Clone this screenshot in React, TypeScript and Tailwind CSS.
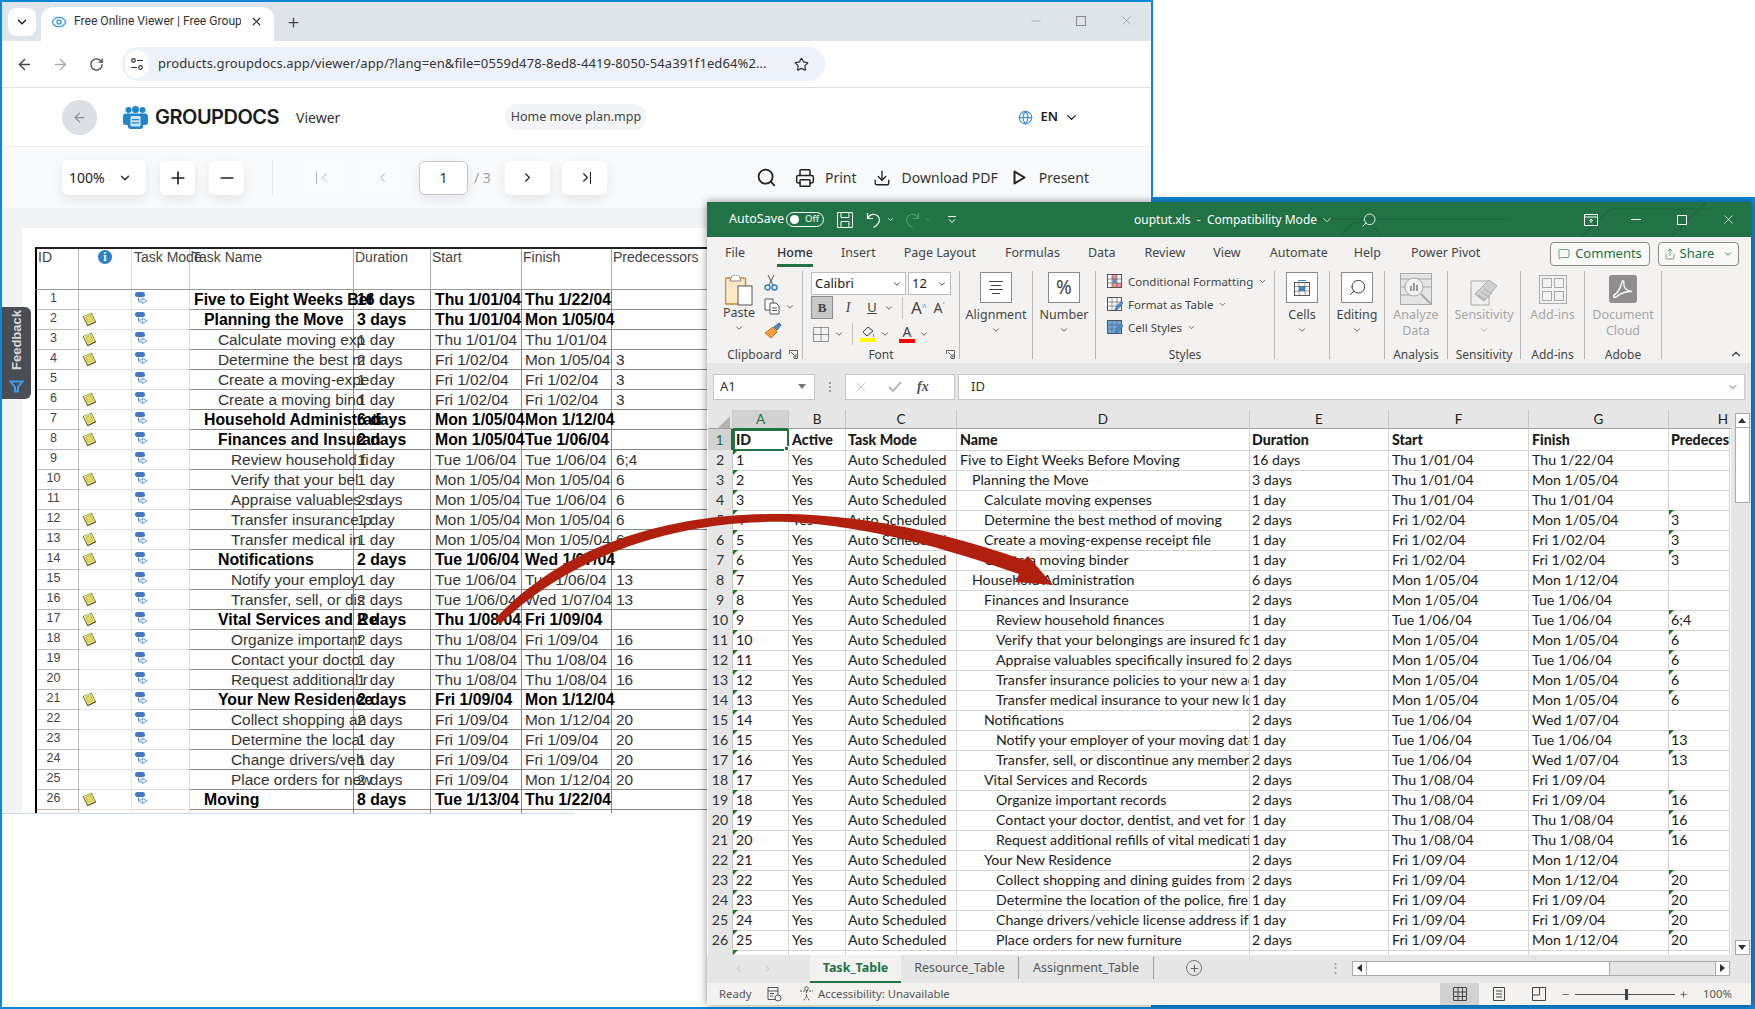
import { ChevronDown, ChevronLeft, ChevronRight, ChevronUp, Plus, Minus, Search, Printer, Download, Globe, ArrowLeft, ArrowRight, RotateCw, Star, X, Eye, MessageSquare, Share } from 'lucide-react';

type Task = { name: string; short?: string; level: number; note?: boolean; dur: string; start: string; finish: string; pred?: string; bold?: boolean };

const tasks: Task[] = [
  { name: 'Five to Eight Weeks Before Moving', short: 'Five to Eight Weeks Bef', level: 0, bold: true, dur: '16 days', start: 'Thu 1/01/04', finish: 'Thu 1/22/04' },
  { name: 'Planning the Move', level: 1, bold: true, note: true, dur: '3 days', start: 'Thu 1/01/04', finish: 'Mon 1/05/04' },
  { name: 'Calculate moving expenses', short: 'Calculate moving exp', level: 2, note: true, dur: '1 day', start: 'Thu 1/01/04', finish: 'Thu 1/01/04' },
  { name: 'Determine the best method of moving', short: 'Determine the best m', level: 2, note: true, dur: '2 days', start: 'Fri 1/02/04', finish: 'Mon 1/05/04', pred: '3' },
  { name: 'Create a moving-expense receipt file', short: 'Create a moving-expe', level: 2, dur: '1 day', start: 'Fri 1/02/04', finish: 'Fri 1/02/04', pred: '3' },
  { name: 'Create a moving binder', short: 'Create a moving bind', level: 2, note: true, dur: '1 day', start: 'Fri 1/02/04', finish: 'Fri 1/02/04', pred: '3' },
  { name: 'Household Administration', short: 'Household Administrati', level: 1, bold: true, note: true, dur: '6 days', start: 'Mon 1/05/04', finish: 'Mon 1/12/04' },
  { name: 'Finances and Insurance', short: 'Finances and Insuran', level: 2, bold: true, note: true, dur: '2 days', start: 'Mon 1/05/04', finish: 'Tue 1/06/04' },
  { name: 'Review household finances', short: 'Review household fi', level: 3, dur: '1 day', start: 'Tue 1/06/04', finish: 'Tue 1/06/04', pred: '6;4' },
  { name: 'Verify that your belongings are insured for the move', short: 'Verify that your bel', level: 3, note: true, dur: '1 day', start: 'Mon 1/05/04', finish: 'Mon 1/05/04', pred: '6' },
  { name: 'Appraise valuables specifically insured for the move', short: 'Appraise valuables s', level: 3, dur: '2 days', start: 'Mon 1/05/04', finish: 'Tue 1/06/04', pred: '6' },
  { name: 'Transfer insurance policies to your new address', short: 'Transfer insurance p', level: 3, note: true, dur: '1 day', start: 'Mon 1/05/04', finish: 'Mon 1/05/04', pred: '6' },
  { name: 'Transfer medical insurance to your new location', short: 'Transfer medical in', level: 3, note: true, dur: '1 day', start: 'Mon 1/05/04', finish: 'Mon 1/05/04', pred: '6' },
  { name: 'Notifications', level: 2, bold: true, note: true, dur: '2 days', start: 'Tue 1/06/04', finish: 'Wed 1/07/04' },
  { name: 'Notify your employer of your moving date', short: 'Notify your employ', level: 3, dur: '1 day', start: 'Tue 1/06/04', finish: 'Tue 1/06/04', pred: '13' },
  { name: 'Transfer, sell, or discontinue any memberships', short: 'Transfer, sell, or dis', level: 3, note: true, dur: '2 days', start: 'Tue 1/06/04', finish: 'Wed 1/07/04', pred: '13' },
  { name: 'Vital Services and Records', short: 'Vital Services and Re', level: 2, bold: true, note: true, dur: '2 days', start: 'Thu 1/08/04', finish: 'Fri 1/09/04' },
  { name: 'Organize important records', short: 'Organize important', level: 3, note: true, dur: '2 days', start: 'Thu 1/08/04', finish: 'Fri 1/09/04', pred: '16' },
  { name: 'Contact your doctor, dentist, and vet for records', short: 'Contact your docto', level: 3, dur: '1 day', start: 'Thu 1/08/04', finish: 'Thu 1/08/04', pred: '16' },
  { name: 'Request additional refills of vital medications', short: 'Request additional r', level: 3, dur: '1 day', start: 'Thu 1/08/04', finish: 'Thu 1/08/04', pred: '16' },
  { name: 'Your New Residence', level: 2, bold: true, note: true, dur: '2 days', start: 'Fri 1/09/04', finish: 'Mon 1/12/04' },
  { name: 'Collect shopping and dining guides from your new town', short: 'Collect shopping an', level: 3, dur: '2 days', start: 'Fri 1/09/04', finish: 'Mon 1/12/04', pred: '20' },
  { name: 'Determine the location of the police, fire station', short: 'Determine the local', level: 3, dur: '1 day', start: 'Fri 1/09/04', finish: 'Fri 1/09/04', pred: '20' },
  { name: 'Change drivers/vehicle license address if needed', short: 'Change drivers/veh', level: 3, dur: '1 day', start: 'Fri 1/09/04', finish: 'Fri 1/09/04', pred: '20' },
  { name: 'Place orders for new furniture', short: 'Place orders for new', level: 3, dur: '2 days', start: 'Fri 1/09/04', finish: 'Mon 1/12/04', pred: '20' },
  { name: 'Moving', level: 1, bold: true, note: true, dur: '8 days', start: 'Tue 1/13/04', finish: 'Thu 1/22/04' },
];

const viewerIndent = ['pl-[4px]', 'pl-[14px]', 'pl-[28px]', 'pl-[41px]'];
const sheetIndent = ['pl-[3px]', 'pl-[15px]', 'pl-[27px]', 'pl-[39px]'];

function NoteIcon() {
  return (
    <svg width="15" height="15" viewBox="0 0 15 15">
      <path d="M.8 4.5 9.5.8l4.7 9.4-8.700 4z" fill="#3b3a1c" />
      <path d="M1.5 4.5 9.2 1.3l4 8.3L5.8 13z" fill="#f4ee78" />
      <path d="M4 5.2l4.5-1.900 2.300 5L6.300 10.400z" fill="none" stroke="#a8a248" strokeWidth="0.8" />
      <path d="M5.500 6.500l3-1.300M6.400 8.300l3-1.300" stroke="#b5af50" strokeWidth="0.7" />
    </svg>
  );
}

function ModeIcon() {
  return (
    <svg width="13" height="12" viewBox="0 0 13 12">
      <rect x="0" y="0" width="10" height="5" rx="2.5" fill="#3f78c4" />
      <path d="M3.5 5.5v2.500h4V6.200L12 8.800l-4.500 2.700V10h-3c-.7 0-1-.4-1-1z" fill="#fff" stroke="#5b8fd0" strokeWidth="0.9" />
    </svg>
  );
}

function GroupDocsLogo() {
  return (
    <svg width="25" height="23" viewBox="0 0 25 23" fill="#1f86cc">
      <circle cx="5.5" cy="4" r="3" />
      <circle cx="12.5" cy="3.5" r="3.5" />
      <circle cx="19.5" cy="4" r="3" />
      <path d="M0 10.5C0 8 1.500 7.500 4 7.500h17c2.500 0 4 .5 4 3v6c0 1.500-1 2.500-3 2.500h-2v1.500c0 1.500-1 2.500-2.500 2.500h-10C6 23 5 22 5 20.500V19H3c-2 0-3-1-3-2.500z" />
      <rect x="7.5" y="10" width="10" height="10.5" rx="1" fill="#cfe6f6" />
      <path d="M9 13h7v1.300H9zM9 16.200h7v1.300H9z" fill="#1f86cc" />
    </svg>
  );
}

function ToolButton({ children, muted, width = 'w-[45px]' }: { children: React.ReactNode; muted?: boolean; width?: string }) {
  return (
    <div className={`flex h-[34px] items-center justify-center rounded-md ${width} ${muted ? 'bg-[#fafbfc] text-[#a8acb2]' : 'bg-white text-[#222] shadow-[0_4px_12px_rgba(0,0,0,0.09)]'}`}>
      {children}
    </div>
  );
}

function BrowserWindow() {
  return (
    <div className="absolute left-0 top-0 flex h-[1009px] w-[1153px] flex-col border-2 border-[#0c88d8] bg-white font-['Noto_Sans',sans-serif]">
      <div className="flex h-[39px] shrink-0 items-end bg-[#dfe3ea] pl-[6px]">
        <div className="mb-[5px] flex h-[28px] w-[28px] items-center justify-center rounded-lg bg-white">
          <ChevronDown size={14} strokeWidth={2.5} className="text-[#222]" />
        </div>
        <div className="ml-[5px] flex h-[34px] w-[233px] items-center rounded-t-xl bg-white pb-[5px] pl-[10px]">
          <Eye size={16} strokeWidth={2} className="text-[#3f9bdc]" />
          <span className="ml-[7px] w-[167px] overflow-hidden whitespace-nowrap font-['Roboto',sans-serif] text-[12.1px] text-[#333]">Free Online Viewer | Free Group</span>
          <X size={13} strokeWidth={2.2} className="ml-[9px] text-[#333]" />
        </div>
        <Plus size={15} className="mb-[11px] ml-[12px] text-[#444]" />
        <div className="mb-[13px] ml-auto flex items-center gap-[33px] pr-[17px] text-[#888]">
          <Minus size={14} strokeWidth={1} />
          <div className="h-[10px] w-[10px] border border-[#888]" />
          <X size={15} strokeWidth={1} />
        </div>
      </div>

      <div className="flex h-[47px] shrink-0 items-center border-b border-[#e0e0e0] pl-[14px]">
        <ArrowLeft size={17} className="text-[#444]" />
        <ArrowRight size={17} className="ml-[19px] text-[#aaa]" />
        <RotateCw size={15} className="ml-[20px] text-[#444]" />
        <div className="ml-[18px] flex h-[34px] w-[703px] items-center rounded-full bg-[#edf2fa] pl-[3px]">
          <div className="flex h-[28px] w-[24px] items-center justify-center rounded-full bg-white">
            <svg width="14" height="14" viewBox="0 0 14 14" fill="none" stroke="#333" strokeWidth="1.2">
              <circle cx="3.5" cy="3.5" r="1.8" />
              <path d="M7 3.5h6M1 10.500h6" />
              <circle cx="10.5" cy="10.5" r="1.8" />
            </svg>
          </div>
          <span className="ml-[9px] whitespace-nowrap text-[13px] tracking-[0.1px] text-[#333]">products.groupdocs.app/viewer/app/?lang=en&amp;file=0559d478-8ed8-4419-8050-54a391f1ed64%2...</span>
          <Star size={15} className="ml-auto mr-[16px] text-[#333]" />
        </div>
      </div>

      <div className="flex h-[59px] shrink-0 items-center border-b border-[#eceef0] pl-[60px]">
        <div className="flex h-[35px] w-[35px] items-center justify-center rounded-full bg-[#dcdfe4]">
          <ArrowLeft size={15} className="text-[#8b9097]" />
        </div>
        <div className="ml-[26px]">
          <GroupDocsLogo />
        </div>
        <span className="ml-[7px] font-['Inter',sans-serif] text-[20px] font-semibold tracking-[-0.5px] text-[#1b1b1b]">GROUPDOCS</span>
        <span className="ml-[17px] text-[14px] text-[#333]">Viewer</span>
        <div className="ml-[165px] flex h-[26px] w-[141px] items-center justify-center rounded-xl bg-[#f3f4f6] text-[12.5px] text-[#444]">Home move plan.mpp</div>
        <Globe size={15} className="ml-[372px] text-[#4a90d9]" />
        <span className="ml-[7px] text-[13px] font-semibold text-[#222]">EN</span>
        <ChevronDown size={15} strokeWidth={2.2} className="ml-[6px] text-[#222]" />
      </div>

      <div className="flex h-[61px] shrink-0 items-center bg-[#f9fafc] pl-[60px]">
        <div className="flex h-[35px] w-[84px] items-center rounded-md bg-white pl-[7px] text-[14px] text-[#222] shadow-[0_4px_12px_rgba(0,0,0,0.09)]">
          100%
          <ChevronDown size={14} strokeWidth={2.2} className="ml-[13px]" />
        </div>
        <div className="ml-[14px]"><ToolButton width="w-[35px]"><Plus size={20} /></ToolButton></div>
        <div className="ml-[14px]"><ToolButton width="w-[35px]"><Minus size={20} /></ToolButton></div>
        <div className="ml-[28px] h-[35px] w-px bg-[#e8e9ec]" />
        <div className="ml-[28px]"><ToolButton muted><span className="flex items-center"><span className="h-[12px] w-px bg-[#a8acb2]" /><ChevronLeft size={15} strokeWidth={1.5} /></span></ToolButton></div>
        <div className="ml-[14px]"><ToolButton muted><ChevronLeft size={15} strokeWidth={1.5} /></ToolButton></div>
        <div className="ml-[14px] flex h-[34px] w-[49px] items-center justify-center rounded-md border border-[#c4c6ca] bg-white text-[14px] text-[#333] shadow-[0_4px_12px_rgba(0,0,0,0.09)]">1</div>
        <span className="ml-[6px] w-[31px] text-[14px] text-[#9a9da2]">/ 3</span>
        <ToolButton><ChevronRight size={15} strokeWidth={1.8} /></ToolButton>
        <div className="ml-[12px]"><ToolButton><span className="flex items-center"><ChevronRight size={15} strokeWidth={1.8} /><span className="-ml-[3px] h-[12px] w-px bg-[#222]" /></span></ToolButton></div>
        <Search size={21} strokeWidth={2} className="ml-[149px] text-[#222]" />
        <Printer size={20} strokeWidth={1.8} className="ml-[18px] text-[#222]" />
        <span className="ml-[10px] text-[14px] text-[#333]">Print</span>
        <Download size={18} strokeWidth={1.8} className="ml-[16px] text-[#222]" />
        <span className="ml-[11px] text-[14px] text-[#333]">Download PDF</span>
        <svg className="ml-[15px]" width="13" height="15" viewBox="0 0 13 15" fill="none" stroke="#222" strokeWidth="2" strokeLinejoin="round"><path d="M1.5 1.5 11.5 7.5 1.5 13.5z" /></svg>
        <span className="ml-[13px] text-[14px] text-[#333]">Present</span>
      </div>

      <div className="h-[605px] shrink-0 overflow-hidden bg-[#f2f3f5] pl-[20px] pt-[20px]">
        <div className="h-full w-[1200px] bg-white pl-[13px] pt-[19px] font-['Liberation_Sans',sans-serif]">
          <div className="flex h-[43px] border-b border-l-2 border-t-2 border-b-[#999] border-l-black border-t-[#222] text-[14px] leading-[17px] text-[#444]">
            <div className="w-[42px] border-r border-[#bbb] pl-[1px]">ID</div>
            <div className="flex w-[53px] justify-center border-r border-[#e4e4e4] pt-[1px]">
              <div className="flex h-[14px] w-[14px] items-center justify-center rounded-full bg-[#2f7fd0] font-['Liberation_Serif',serif] text-[12px] font-bold leading-none text-white">i</div>
            </div>
            <div className="w-[58px] whitespace-nowrap border-r border-[#ccc] pl-[2px]">Task Mode</div>
            <div className="w-[164px] border-r border-[#aaa] pl-[2px]">Task Name</div>
            <div className="w-[77px] border-r border-[#aaa] pl-[1px]">Duration</div>
            <div className="w-[91px] border-r border-[#aaa] pl-[1px]">Start</div>
            <div className="w-[90px] border-r border-[#aaa] pl-[1px]">Finish</div>
            <div className="pl-[1px]">Predecessors</div>
          </div>
          {tasks.map((t, i) => (
            <div key={i} className={`flex h-[20px] items-center border-l-2 border-l-black leading-[20px] ${t.bold ? 'text-[15.8px] font-bold text-black' : 'text-[15.4px] text-[#333]'}`}>
              <div className="flex h-full w-[42px] justify-center border-b border-r border-[#bbb] pr-[8px] text-[12.5px] font-normal leading-[17px] text-[#444]">{i + 1}</div>
              <div className="flex h-full w-[53px] items-center border-b border-r border-[#e8e8e8] pl-[3px]">{t.note && <NoteIcon />}</div>
              <div className="flex h-full w-[58px] items-start border-b border-r border-[#ddd] pl-[3px] pt-[2px]"><ModeIcon /></div>
              <div className={`h-full w-[164px] whitespace-nowrap border-b border-r border-[#888] ${viewerIndent[t.level]}`}>{t.short ?? t.name}</div>
              <div className="h-full w-[77px] whitespace-nowrap border-b border-r border-[#888] pl-[3px]">{t.dur}</div>
              <div className="h-full w-[91px] whitespace-nowrap border-b border-r border-[#888] pl-[4px]">{t.start}</div>
              <div className="h-full w-[90px] whitespace-nowrap border-b border-r border-[#888] pl-[3px]">{t.finish}</div>
              <div className="h-full w-[120px] border-b border-[#888] pl-[4px] font-normal">{t.pred}</div>
            </div>
          ))}
          <div className="flex h-[10px] border-l-2 border-l-black">
            <div className="w-[42px] border-r border-[#bbb]" />
            <div className="w-[53px] border-r border-[#e8e8e8]" />
            <div className="w-[58px] border-r border-[#ddd]" />
            <div className="w-[164px] border-r border-[#888]" />
            <div className="w-[77px] border-r border-[#888]" />
            <div className="w-[91px] border-r border-[#888]" />
            <div className="w-[90px] border-r border-[#888]" />
          </div>
        </div>
      </div>
      <div className="h-px w-[572px] bg-[#c8d8f0]" />
      <div className="flex-1 bg-white" />

      <div className="absolute left-0 top-[305px] flex h-[92px] w-[29px] flex-col items-center justify-end rounded-r-md bg-[#4a4e54] pb-[6px]">
        <span className="mb-[10px] rotate-180 font-['Liberation_Sans',sans-serif] text-[13px] font-bold text-[#d8d8d8] [writing-mode:vertical-rl]">Feedback</span>
        <svg width="15" height="13" viewBox="0 0 15 13" fill="none" stroke="#3d9be9" strokeWidth="2"><path d="M1.5 1.5h12L9 7v4.5H6V7z" /></svg>
      </div>
    </div>
  );
}

function Launcher() {
  return (
    <svg className="absolute right-[4px] top-[2px]" width="9" height="9" viewBox="0 0 9 9" fill="none" stroke="#666">
      <path d="M.5 4V.5h8v8H5M2 2l5 5M7 4v3H4" />
    </svg>
  );
}

function RibbonGroup({ width, label, children, last, launcher }: { width: string; label: string; children?: React.ReactNode; last?: boolean; launcher?: boolean }) {
  return (
    <div className={`flex h-[88px] shrink-0 flex-col ${width} ${last ? '' : 'border-r border-[#b8b8b8]'}`}>
      <div className="h-[77px] shrink-0">{children}</div>
      <div className="relative h-[14px] shrink-0 text-center text-[12px] leading-[14px] text-[#444]">
        {label}
        {launcher && <Launcher />}
      </div>
    </div>
  );
}

function BigBox({ children, label }: { children: React.ReactNode; label: string }) {
  return (
    <div className="flex flex-col items-center">
      <div className="flex h-[31px] w-[32px] items-center justify-center border border-[#8a8a8a] bg-white">{children}</div>
      <div className="mt-[4px] text-[12.5px] leading-[16px] text-[#444]">{label}</div>
      <ChevronDown size={10} strokeWidth={2} className="mt-[2px] text-[#444]" />
    </div>
  );
}

function GridIcon({ kind }: { kind: 'cond' | 'table' | 'style' }) {
  return (
    <svg width="16" height="15" viewBox="0 0 16 15" className="shrink-0">
      <rect x="0.5" y="0.5" width="14" height="13" fill={kind === 'style' ? '#6aa9e4' : '#fff'} stroke="#555" />
      {kind === 'cond' && <path d="M5 1h5v4H5zM5 9h9v4H5z" fill="#ee8b8b" />}
      {kind === 'cond' && <path d="M5.5 5h4v4h-4z" fill="#4d94d6" />}
      <path d="M5 1v12M10 1v12M1 5h13M1 9h13" stroke="#666" strokeWidth="0.7" />
      {kind !== 'cond' && <path d="M14.5 4 9 10l-2 4 4-2 5-6z" fill="#4d94d6" stroke="#2a5d90" strokeWidth="0.6" />}
    </svg>
  );
}

function Ribbon() {
  return (
    <div className="flex h-[93px] shrink-0 bg-[#f3f2f1] pt-px shadow-[0_2px_3px_rgba(0,0,0,0.15)]">
      <RibbonGroup width="w-[96px]" label="Clipboard" launcher>
        <div className="flex pl-[16px]">
          <div className="flex w-[32px] flex-col items-center pt-[4px]">
            <svg width="28" height="31" viewBox="0 0 28 31">
              <rect x="0.5" y="3" width="20" height="26" rx="1" fill="#fbe8c4" stroke="#d6872a" strokeWidth="1.4" />
              <path d="M6 3c0-2 2-3 4.5-3S15 1 15 3l1 3H5z" fill="#fff" stroke="#888" />
              <rect x="13" y="11" width="14" height="19" fill="#fff" stroke="#555" />
            </svg>
            <span className="text-[12.5px] leading-[14px] text-[#444]">Paste</span>
            <ChevronDown size={10} strokeWidth={2} className="mt-[3px] text-[#444]" />
          </div>
          <div className="ml-[9px] flex flex-col gap-[7px] pt-[3px]">
            <svg width="14" height="17" viewBox="0 0 14 17" fill="none"><path d="M4 1l5 10M10 1 5 11" stroke="#555" /><circle cx="3.5" cy="13.5" r="2.5" stroke="#2f7fd0" strokeWidth="1.4" /><circle cx="10.5" cy="13.5" r="2.5" stroke="#2f7fd0" strokeWidth="1.4" /></svg>
            <div className="flex items-center">
              <svg width="17" height="17" viewBox="0 0 17 17" fill="#fff" stroke="#555"><path d="M1 1h8v11H1z" /><path d="M6 5h6l3 3v8H6z" /><path d="M8 10h5M8 12.5h5" /></svg>
              <ChevronDown size={10} strokeWidth={2} className="ml-[4px] text-[#444]" />
            </div>
            <svg width="18" height="16" viewBox="0 0 18 16"><path d="M1 11 9 5l4 5-6 6z" fill="#f0a040" stroke="#c76d10" /><path d="M10 5l5-4 2 2-4 5z" fill="#5f8fc0" stroke="#385f88" /></svg>
          </div>
        </div>
      </RibbonGroup>

      <RibbonGroup width="w-[157px]" label="Font" launcher>
        <div className="flex flex-col pl-[8px] pt-px">
          <div className="flex h-[23px] gap-[2px]">
            <div className="flex w-[95px] items-center justify-between border border-[#bdbdbd] bg-white px-[3px] text-[13px] text-[#222]">Calibri<ChevronDown size={10} strokeWidth={2} /></div>
            <div className="flex w-[43px] items-center justify-between border border-[#bdbdbd] bg-white px-[3px] text-[13px] text-[#222]">12<ChevronDown size={10} strokeWidth={2} /></div>
          </div>
          <div className="mt-px flex h-[23px] items-center text-[#444]">
            <div className="flex h-[23px] w-[22px] items-center justify-center border border-[#8a8a8a] bg-[#c8c8c8] font-['Liberation_Serif',serif] text-[13px] font-bold">B</div>
            <span className="ml-[9px] w-[12px] text-center font-['Liberation_Serif',serif] text-[14px] italic">I</span>
            <span className="ml-[13px] w-[10px] text-center text-[13px] underline">U</span>
            <ChevronDown size={10} strokeWidth={2} className="ml-[7px]" />
            <div className="ml-[8px] h-[22px] w-px bg-[#c4c4c4]" />
            <span className="ml-[8px] text-[17px] leading-none">A<sup className="text-[8px] text-[#2f7fd0]">^</sup></span>
            <span className="ml-[7px] text-[14px] leading-none">A<sup className="text-[8px] text-[#2f7fd0]">˅</sup></span>
          </div>
          <div className="mt-[3px] flex h-[24px] items-center text-[#444]">
            <svg width="16" height="15" viewBox="0 0 16 15" fill="none" stroke="#333" strokeDasharray="1 1" className="ml-[2px]"><path d="M.5.5h15v14H.5zM8 .5v14M.5 7.5h15" /></svg>
            <ChevronDown size={10} strokeWidth={2} className="ml-[5px]" />
            <div className="ml-[8px] h-[22px] w-px bg-[#c4c4c4]" />
            <div className="ml-[7px] flex w-[16px] flex-col items-center">
              <svg width="13" height="12" viewBox="0 0 13 12" fill="none" stroke="#444"><path d="M6 1 1 6l4 4 6-5z" /><path d="M12 8c-1 1-1 2 0 3" stroke="#2f7fd0" /></svg>
              <div className="h-[4px] w-[16px] bg-[#ffff00]" />
            </div>
            <ChevronDown size={10} strokeWidth={2} className="ml-[4px]" />
            <div className="ml-[9px] flex w-[16px] flex-col items-center">
              <span className="text-[14px] leading-[12px]">A</span>
              <div className="mt-px h-[4px] w-[16px] bg-[#ff0000]" />
            </div>
            <ChevronDown size={10} strokeWidth={2} className="ml-[4px]" />
          </div>
        </div>
      </RibbonGroup>

      <RibbonGroup width="w-[73px]" label="">
        <div className="pt-px">
          <BigBox label="Alignment">
            <svg width="16" height="13" viewBox="0 0 16 13" stroke="#444"><path d="M1 .5h14M3 4.5h10M1 8.5h14M4 12.5h8" /></svg>
          </BigBox>
        </div>
      </RibbonGroup>
      <RibbonGroup width="w-[63px]" label="">
        <div className="pt-px">
          <BigBox label="Number"><span className="text-[19px] leading-none text-[#444]">%</span></BigBox>
        </div>
      </RibbonGroup>

      <RibbonGroup width="w-[179px]" label="Styles">
        <div className="flex flex-col gap-[8px] pl-[11px] pt-[3px] text-[11.5px] leading-[15px] text-[#444]">
          <div className="flex items-center gap-[5px] whitespace-nowrap"><GridIcon kind="cond" />Conditional Formatting<ChevronDown size={9} strokeWidth={2} /></div>
          <div className="flex items-center gap-[5px] whitespace-nowrap"><GridIcon kind="table" />Format as Table<ChevronDown size={9} strokeWidth={2} /></div>
          <div className="flex items-center gap-[5px] whitespace-nowrap"><GridIcon kind="style" />Cell Styles<ChevronDown size={9} strokeWidth={2} /></div>
        </div>
      </RibbonGroup>

      <RibbonGroup width="w-[55px]" label="">
        <div className="pt-px">
          <BigBox label="Cells">
            <svg width="18" height="18" viewBox="0 0 18 18" fill="none"><rect x="1.5" y="3.5" width="15" height="13" fill="#fff" stroke="#555" /><rect x="6" y="7" width="6" height="5" fill="#2f8ad8" /><path d="M6 3.5v13M12 3.5v13M1.5 7.5h15M1.5 12h15" stroke="#666" strokeWidth="0.7" /><path d="M5 1.5h8" stroke="#2f8ad8" /></svg>
          </BigBox>
        </div>
      </RibbonGroup>
      <RibbonGroup width="w-[55px]" label="">
        <div className="pt-px">
          <BigBox label="Editing"><Search size={19} strokeWidth={1.2} className="-scale-x-100 text-[#333]" /></BigBox>
        </div>
      </RibbonGroup>

      <RibbonGroup width="w-[63px]" label="Analysis">
        <div className="flex flex-col items-center pt-[2px] text-[12.5px] leading-[16px] text-[#a6a6a6]">
          <svg width="32" height="33" viewBox="0 0 32 33" fill="none" stroke="#a9a9a9">
            <rect x="0.5" y="0.5" width="31" height="31" fill="#e4e4e4" />
            <path d="M0 6h32M0 14h10M0 22h10M22 14h10" />
            <circle cx="14" cy="14" r="9" fill="#f3f2f1" />
            <path d="M10 18v-5h2v5zM13 18v-8h2v8zM16 18v-6h2v6z" fill="#999" stroke="none" />
            <path d="M21 21l10 10" strokeWidth="2" />
          </svg>
          <span className="mt-px">Analyze</span>
          <span>Data</span>
        </div>
      </RibbonGroup>
      <RibbonGroup width="w-[73px]" label="Sensitivity">
        <div className="flex flex-col items-center pt-[2px] text-[12.5px] leading-[16px] text-[#a6a6a6]">
          <svg width="28" height="33" viewBox="0 0 28 33" fill="none" stroke="#a9a9a9">
            <path d="M1 8h18v24H1z" fill="#efefef" />
            <path d="M5 21 19 7l8 6-13 15z" fill="#d0d0d0" />
            <path d="M8 22l8 5M11 19l8 5M14 16l8 5" />
          </svg>
          <span className="mt-px">Sensitivity</span>
          <ChevronDown size={10} strokeWidth={2} className="mt-[2px]" />
        </div>
      </RibbonGroup>
      <RibbonGroup width="w-[64px]" label="Add-ins">
        <div className="flex flex-col items-center pt-[4px] text-[12.5px] leading-[16px] text-[#a6a6a6]">
          <svg width="28" height="29" viewBox="0 0 28 29" fill="none" stroke="#a9a9a9"><rect x="0.5" y="0.5" width="27" height="28" /><rect x="3.5" y="3.5" width="9" height="9" /><rect x="15.5" y="3.5" width="9" height="9" /><rect x="3.5" y="16.5" width="9" height="9" /><rect x="15.5" y="16.5" width="9" height="9" /></svg>
          <span className="mt-[3px]">Add-ins</span>
        </div>
      </RibbonGroup>
      <RibbonGroup width="w-[77px]" label="Adobe">
        <div className="flex flex-col items-center pt-[4px] text-[12.5px] leading-[16px] text-[#a6a6a6]">
          <svg width="28" height="28" viewBox="0 0 28 28"><rect width="28" height="28" rx="3" fill="#8f8d8d" /><path d="M5 20c3-1 6-6 8-13 .5-2 2-2 1.8 1-.3 4 2 8 8 8.5-5 0-11 1.5-15 5-2 1.5-4 .5-2.8-1.500z" fill="none" stroke="#fff" strokeWidth="1.4" /></svg>
          <span className="mt-[4px]">Document</span>
          <span>Cloud</span>
        </div>
      </RibbonGroup>
      <div className="flex flex-1 items-end justify-end pb-[2px] pr-[8px]"><ChevronUp size={14} className="text-[#444]" /></div>
    </div>
  );
}

function Cell({ className = '', children, flag }: { className?: string; children?: React.ReactNode; flag?: boolean }) {
  return (
    <div className={`relative overflow-hidden whitespace-nowrap border-b border-r border-[#d4d4d4] ${className}`}>
      {flag && <div className="absolute left-0 top-0 h-0 w-0 border-r-[5px] border-t-[5px] border-r-transparent border-t-[#107c10]" />}
      {children}
    </div>
  );
}

const cols = 'grid grid-cols-[25px_56px_57px_111px_293px_139px_140px_140px_61px]';

function Sheet() {
  return (
    <div className="flex h-[545px] shrink-0 bg-white font-['Lato',sans-serif] text-[14.2px] text-[#1a1a1a]">
      <div className="w-[1024px] overflow-hidden pl-px">
        <div className={`${cols} h-[19px] border-b border-[#9f9f9f] bg-[#e6e6e6] text-center text-[13.5px] leading-[18px] text-[#222]`}>
          <div className="flex items-end justify-end border-r border-[#c6c6c6] pb-[2px] pr-[2px]">
            <div className="h-0 w-0 border-b-[12px] border-l-[12px] border-b-[#b4b4b4] border-l-transparent" />
          </div>
          <div className="border-b-2 border-r border-b-[#217346] border-r-[#c6c6c6] bg-[#d2d2d2] text-[#217346]">A</div>
          {['B', 'C', 'D', 'E', 'F', 'G'].map((c) => (
            <div key={c} className="border-r border-[#c6c6c6]">{c}</div>
          ))}
          <div className="pr-[2px] text-right">H</div>
        </div>
        <div className={`${cols} h-[21px] leading-[21px]`}>
          <div className="border-b border-r-2 border-b-[#c6c6c6] border-r-[#217346] bg-[#d2d2d2] text-center text-[#217346]">1</div>
          <div className="relative border-2 border-[#217346] pl-[1px] font-black leading-[17px]">
            ID
            <div className="absolute -bottom-[2px] -right-[2px] h-[5px] w-[5px] border border-white bg-[#217346]" />
          </div>
          <Cell className="pl-[3px] font-black">Active</Cell>
          <Cell className="pl-[2px] font-black">Task Mode</Cell>
          <Cell className="pl-[3px] font-black">Name</Cell>
          <Cell className="pl-[2px] font-black">Duration</Cell>
          <Cell className="pl-[3px] font-black">Start</Cell>
          <Cell className="pl-[3px] font-black">Finish</Cell>
          <Cell className="pl-[2px] font-black">Predecessors</Cell>
        </div>
        {tasks.map((t, i) => (
          <div key={i} className={`${cols} h-[20px] leading-[20px]`}>
            <div className="border-b border-r border-[#c6c6c6] bg-[#e6e6e6] text-center text-[#333]">{i + 2}</div>
            <Cell className="pl-[3px]" flag>{i + 1}</Cell>
            <Cell className="pl-[3px]">Yes</Cell>
            <Cell className="pl-[2px]">Auto Scheduled</Cell>
            <Cell className={sheetIndent[t.level]}>{t.name}</Cell>
            <Cell className="pl-[2px]">{t.dur}</Cell>
            <Cell className="pl-[3px]">{t.start}</Cell>
            <Cell className="pl-[3px]">{t.finish}</Cell>
            <Cell className="pl-[2px]" flag={!!t.pred}>{t.pred}</Cell>
          </div>
        ))}
        <div className={`${cols} h-[5px]`}>
          <div className="border-r border-[#c6c6c6] bg-[#e6e6e6]" />
          <div className="relative border-r border-[#d4d4d4]"><div className="absolute left-0 top-0 h-0 w-0 border-r-[5px] border-t-[5px] border-r-transparent border-t-[#107c10]" /></div>
          <div className="border-r border-[#d4d4d4]" />
          <div className="border-r border-[#d4d4d4]" />
          <div className="border-r border-[#d4d4d4]" />
          <div className="border-r border-[#d4d4d4]" />
          <div className="border-r border-[#d4d4d4]" />
          <div className="border-r border-[#d4d4d4]" />
        </div>
      </div>
      <div className="flex w-[20px] flex-col items-center bg-[#e6e6e6] pl-[2px] pt-[3px]">
        <div className="flex h-[15px] w-[15px] items-center justify-center border border-[#aaa] bg-white"><div className="h-0 w-0 border-b-[5px] border-l-[4px] border-r-[4px] border-b-[#333] border-l-transparent border-r-transparent" /></div>
        <div className="h-[75px] w-[15px] border-x border-b border-[#aaa] bg-white" />
        <div className="flex-1" />
        <div className="flex h-[15px] w-[15px] items-center justify-center border border-[#aaa] bg-white"><div className="h-0 w-0 border-l-[4px] border-r-[4px] border-t-[5px] border-l-transparent border-r-transparent border-t-[#333]" /></div>
      </div>
    </div>
  );
}

function ExcelWindow() {
  const tabs = [
    ['File', 'ml-[18px]'], ['Home', 'ml-[32px]'], ['Insert', 'ml-[28px]'], ['Page Layout', 'ml-[28px]'], ['Formulas', 'ml-[29px]'], ['Data', 'ml-[28px]'],
    ['Review', 'ml-[29px]'], ['View', 'ml-[28px]'], ['Automate', 'ml-[29px]'], ['Help', 'ml-[26px]'], ['Power Pivot', 'ml-[30px]'],
  ];
  return (
    <div className="absolute left-[707px] top-[202px] flex h-[803px] w-[1044px] flex-col overflow-hidden bg-[#f3f2f1] font-['Noto_Sans',sans-serif] shadow-[0_0_8px_rgba(0,0,0,0.45)]">
      <div className="relative flex h-[35px] shrink-0 items-center bg-[#217346] pl-[22px] text-white">
        <svg className="pointer-events-none absolute right-0 top-0" width="500" height="35" fill="none" stroke="#1d6a40" strokeWidth="2">
          <path d="M0 17h260M330 35l30-28h100M420 35l35-35M90 35c10-20 30-20 40 0" />
        </svg>
        <span className="relative w-[50px] text-[12.5px]">AutoSave</span>
        <div className="relative ml-[7px] flex h-[15px] w-[38px] items-center rounded-full border border-white pl-[3px] text-[9.5px]">
          <span className="h-[9px] w-[9px] rounded-full bg-white" />
          <span className="ml-[6px]">Off</span>
        </div>
        <svg className="relative ml-[13px]" width="16" height="16" viewBox="0 0 16 16" fill="none" stroke="#fff"><path d="M.5.5h15v15H.5zM4 .5v5h8v-5M4 15.5v-6h8v6" /></svg>
        <svg className="relative ml-[13px]" width="16" height="16" viewBox="0 0 16 16" fill="none" stroke="#fff" strokeWidth="1.2"><path d="M1.5 1v5.5H7M1.5 6.5C3 3.500 6 2 9 2.500c4 .7 5.500 5 3.500 8.500-1 1.800-3 3.500-5 4.500" /></svg>
        <ChevronDown size={9} strokeWidth={2} className="relative ml-[4px]" />
        <svg className="relative ml-[9px]" width="16" height="16" viewBox="0 0 16 16" fill="none" stroke="#4f9a72" strokeWidth="1.2"><path d="M14.5 1v5.5H9M14.5 6.5C13 3.500 10 2 7 2.500c-4 .7-5.500 5-3.500 8.500 1 1.800 3 3.500 5 4.500" /></svg>
        <ChevronDown size={9} strokeWidth={2} className="relative ml-[4px] text-[#4f9a72]" />
        <svg className="relative ml-[15px]" width="8" height="8" viewBox="0 0 8 8" fill="none" stroke="#fff"><path d="M0 .5h8M1 3.5l3 3 3-3" /></svg>
        <span className="relative ml-[178px] whitespace-nowrap text-[12px]">ouptut.xls&nbsp; -&nbsp; Compatibility Mode</span>
        <ChevronDown size={14} strokeWidth={1.3} className="relative ml-[3px]" />
        <Search size={16} strokeWidth={1.3} className="relative ml-[27px] -scale-x-100" />
        <svg className="relative ml-[207px]" width="14" height="12" viewBox="0 0 14 12" fill="none" stroke="#fff"><path d="M.5.5h13v11H.5zM.5 3h13M7 9V5M5 7l2-2 2 2" /></svg>
        <div className="relative ml-[33px] h-px w-[10px] bg-white" />
        <div className="relative ml-[36px] h-[10px] w-[10px] border border-white" />
        <X size={15} strokeWidth={1.2} className="relative ml-[34px]" />
      </div>

      <div className="flex h-[33px] shrink-0 items-center text-[12.5px] text-[#444]">
        {tabs.map(([label, ml]) => (
          <div key={label} className={`flex h-[26px] items-center whitespace-nowrap ${ml} ${label === 'Home' ? 'border-b-[3px] border-[#217346] pt-[3px] font-medium text-[#333]' : ''}`}>
            {label}
          </div>
        ))}
        <div className="ml-auto flex h-[24px] w-[100px] items-center justify-center gap-[5px] rounded border border-[#8a8a8a] bg-white/50 text-[13px] text-[#217346]"><MessageSquare size={12} strokeWidth={1.3} />Comments</div>
        <div className="ml-[8px] mr-[12px] flex h-[24px] w-[81px] items-center justify-center gap-[4px] rounded border border-[#8a8a8a] bg-white/50 text-[13px] text-[#217346]"><Share size={12} strokeWidth={1.3} />Share<ChevronDown size={10} strokeWidth={2} className="ml-[5px]" /></div>
      </div>

      <Ribbon />

      <div className="flex h-[47px] shrink-0 items-center bg-[#e6e6e6] pl-[6px] text-[13px] text-[#333]">
        <div className="flex h-[26px] w-[102px] items-center justify-between border border-[#c6c6c6] bg-white pl-[6px] pr-[8px]">A1<div className="h-0 w-0 border-l-[4px] border-r-[4px] border-t-[5px] border-l-transparent border-r-transparent border-t-[#777]" /></div>
        <div className="ml-[14px] flex flex-col gap-[2px]"><span className="h-[2px] w-[2px] bg-[#999]" /><span className="h-[2px] w-[2px] bg-[#999]" /><span className="h-[2px] w-[2px] bg-[#999]" /></div>
        <div className="ml-[14px] flex h-[26px] w-[110px] items-center border border-[#c6c6c6] bg-white pl-[8px] text-[#bbb]">
          <X size={14} strokeWidth={1.5} />
          <svg className="ml-[20px]" width="14" height="12" viewBox="0 0 14 12" fill="none" stroke="#bbb" strokeWidth="2"><path d="M1 6l4 4 8-9" /></svg>
          <span className="ml-[15px] font-['Liberation_Serif',serif] text-[14px] font-bold italic text-[#555]">fx</span>
        </div>
        <div className="ml-[3px] flex h-[26px] w-[787px] items-center justify-between border border-[#c6c6c6] bg-white pl-[12px] pr-[5px]">ID<ChevronDown size={12} strokeWidth={2} className="text-[#666]" /></div>
      </div>

      <Sheet />

      <div className="flex h-[28px] shrink-0 items-center bg-[#e6e6e6] pb-[2px] text-[12.5px] text-[#555]">
        <ChevronLeft size={11} className="ml-[26px] text-[#bbb]" />
        <ChevronRight size={11} className="ml-[18px] text-[#bbb]" />
        <div className="-mb-[2px] ml-[37px] flex h-[28px] w-[91px] items-center justify-center border-b-2 border-[#217346] bg-[#f3f2f1] font-bold text-[#217346]">Task_Table</div>
        <div className="flex h-[22px] w-[118px] items-center justify-center border-r border-[#999]">Resource_Table</div>
        <div className="flex h-[22px] w-[135px] items-center justify-center border-r border-[#999]">Assignment_Table</div>
        <div className="ml-[32px] flex h-[16px] w-[16px] items-center justify-center rounded-full border border-[#777]"><Plus size={11} /></div>
        <span className="ml-[127px] text-[#999]">⋮</span>
        <div className="ml-[10px] flex h-[15px] w-[378px] items-center border border-[#aaa] bg-[#e6e6e6]">
          <div className="flex h-full w-[14px] items-center justify-center border-r border-[#aaa] bg-white"><div className="h-0 w-0 border-b-[4px] border-r-[5px] border-t-[4px] border-b-transparent border-r-[#333] border-t-transparent" /></div>
          <div className="h-full w-[243px] border-r border-[#aaa] bg-white" />
          <div className="flex-1" />
          <div className="flex h-full w-[14px] items-center justify-center border-l border-[#aaa] bg-white"><div className="h-0 w-0 border-b-[4px] border-l-[5px] border-t-[4px] border-b-transparent border-l-[#333] border-t-transparent" /></div>
        </div>
      </div>

      <div className="flex h-[22px] shrink-0 items-center bg-[#f3f2f1] pl-[12px] text-[11.3px] text-[#555]">
        <span className="w-[48px]">Ready</span>
        <svg width="15" height="15" viewBox="0 0 15 15" fill="none" stroke="#555"><path d="M1 .5h10v12H1zM1 4h10M3 6.5h4M3 9h3" /><circle cx="11" cy="11" r="3" fill="#f3f2f1" /></svg>
        <svg className="ml-[17px]" width="15" height="16" viewBox="0 0 15 16" fill="none" stroke="#555"><circle cx="7.5" cy="2.5" r="1.8" /><path d="M1 5h13M7.5 5v5M7.5 10l-3 5M7.5 10l3 5" strokeDasharray="2 1" /></svg>
        <span className="ml-[4px] w-[622px]">Accessibility: Unavailable</span>
        <div className="flex h-[22px] w-[39px] items-center justify-center bg-[#d2d2d2]">
          <svg width="14" height="14" viewBox="0 0 14 14" fill="none" stroke="#444"><path d="M.5.5h13v13H.5zM5 .5v13M9.5.5v13M.5 5h13M.5 9.5h13" /></svg>
        </div>
        <svg className="ml-[13px]" width="14" height="14" viewBox="0 0 14 14" fill="none" stroke="#444"><path d="M1.5.5h11v13h-11zM4 4h6M4 7h6M4 10h6" /></svg>
        <svg className="ml-[26px]" width="14" height="14" viewBox="0 0 14 14" fill="none" stroke="#444"><path d="M.5.5h13v13H.5zM.5 8h7M7.5.5V8" /></svg>
        <Minus size={9} className="ml-[15px] text-[#444]" />
        <div className="relative ml-[5px] flex h-[12px] w-[100px] items-center">
          <div className="h-px w-full bg-[#555]" />
          <div className="absolute left-[50px] h-[11px] w-[3px] bg-[#444]" />
        </div>
        <Plus size={9} className="ml-[4px] text-[#444]" />
        <span className="ml-[15px]">100%</span>
      </div>
    </div>
  );
}

function RedArrow() {
  return (
    <svg className="pointer-events-none absolute left-0 top-0" width="1755" height="1009" viewBox="0 0 1755 1009">
      <path d="M495 619C570 539 680 512 790 514C870 516 950 534 1024 560L1028 556L1053 585L1015 582L1019 574C950 550 870 526 790 522C690 519 580 548 500 624Z" fill="#b0200c" />
    </svg>
  );
}

export default function App() {
  return (
    <div className="relative h-[1009px] w-[1755px] overflow-hidden bg-white">
      <BrowserWindow />
      <div className="absolute bottom-0 left-[1151px] right-0 top-[197px] bg-[#0c88d8]" />
      <ExcelWindow />
      <RedArrow />
    </div>
  );
}
